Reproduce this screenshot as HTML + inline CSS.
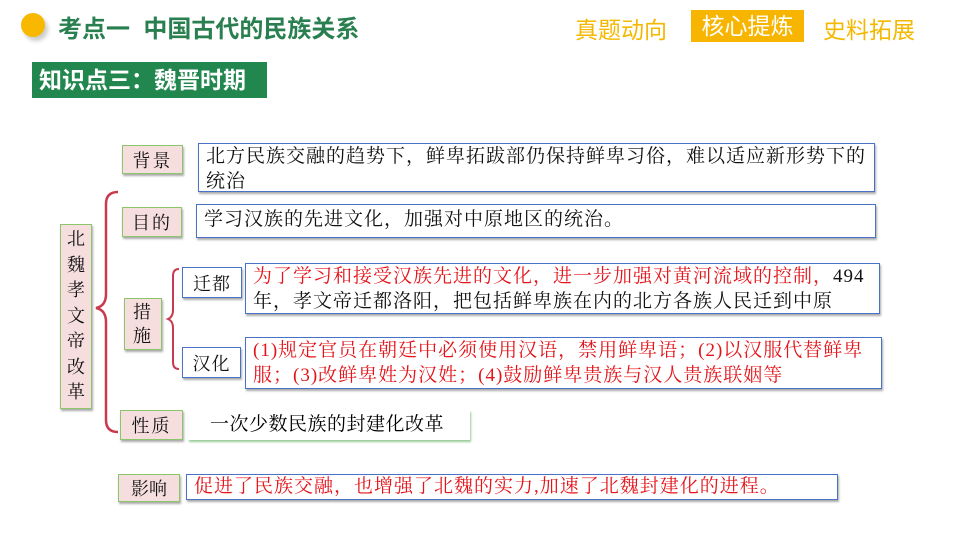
<!DOCTYPE html><html><head><meta charset="utf-8"><style>
body{margin:0;width:960px;height:540px;background:#fff;position:relative;overflow:hidden;font-family:"Liberation Serif","Noto Serif CJK SC",serif;}
.a{position:absolute;box-sizing:border-box}
.h{font-family:"Liberation Sans","Noto Sans CJK SC",sans-serif;font-weight:bold}
.lab{background:#f6dede;border:1.5px solid #8cc66a;box-shadow:1px 2px 2px #aaa;display:flex;align-items:center;justify-content:center;font-size:18px;color:#111;letter-spacing:2px}
.bx{border:1.5px solid #4a72c4;background:#fff;box-shadow:1px 2px 2px #aaa;font-size:19px;letter-spacing:1px;line-height:25px;padding:0 4px 0 7px;color:#111;word-break:break-all}
.red{color:#e4141a}
.wl{background:#fff;border:1.5px solid #4a72c4;box-shadow:1px 2px 2px #aaa;display:flex;align-items:center;justify-content:center;font-size:18px;color:#111;letter-spacing:1px}
</style></head><body>
<div class="a" style="left:21px;top:13px;width:24px;height:24px;border-radius:50%;background:#f8b800;box-shadow:3px 4px 4px #ccc"></div>
<div class="a h" style="left:58px;top:9px;font-size:24px;color:#2a7f50;white-space:nowrap">考点一&nbsp;&nbsp;中国古代的民族关系</div>
<div class="a h" style="left:32px;top:62px;width:235px;height:36px;background:#22874f;color:#fff;font-size:23px;line-height:36px;padding-left:7px">知识点三：魏晋时期</div>
<div class="a h" style="left:575px;top:11px;font-size:23px;color:#f5b800;font-weight:normal">真题动向</div>
<div class="a h" style="left:691px;top:10px;width:113px;height:32px;background:#f7b500;color:#fff;font-size:23px;font-weight:normal;text-align:center;line-height:32px">核心提炼</div>
<div class="a h" style="left:823px;top:11px;font-size:23px;color:#f5b800;font-weight:normal">史料拓展</div>

<div class="a lab" style="left:60px;top:224px;width:32px;height:185px;flex-direction:column;line-height:25.5px;letter-spacing:0">北<br>魏<br>孝<br>文<br>帝<br>改<br>革</div>
<svg class="a" style="left:90px;top:188px" width="35" height="250"><path d="M28 4 Q16 4 16 16 L16 106 Q16 118 6 120 Q16 122 16 134 L16 232 Q16 244 28 244" fill="none" stroke="#c83a4e" stroke-width="2.5"/></svg>
<svg class="a" style="left:165px;top:266px" width="20" height="106"><path d="M14 3 Q8 3 8 10 L8 44 Q8 51 3 53 Q8 55 8 62 L8 96 Q8 103 14 103" fill="none" stroke="#c83a4e" stroke-width="2"/></svg>

<div class="a lab" style="left:122px;top:145px;width:61px;height:29px">背景</div>
<div class="a bx" style="left:198px;top:143px;width:677px;height:49px">北方民族交融的趋势下，鲜卑拓跋部仍保持鲜卑习俗，难以适应新形势下的统治</div>
<div class="a lab" style="left:122px;top:207px;width:60px;height:30px">目的</div>
<div class="a bx" style="left:196px;top:204px;width:680px;height:34px;line-height:30px">学习汉族的先进文化，加强对中原地区的统治。</div>
<div class="a lab" style="left:124px;top:298px;width:38px;height:52px;flex-direction:column;line-height:24px">措<br>施</div>
<div class="a wl" style="left:182px;top:267px;width:60px;height:31px">迁都</div>
<div class="a bx" style="left:245px;top:263px;width:635px;height:51px"><span class="red">为了学习和接受汉族先进的文化，进一步加强对黄河流域的控制，</span>494年，孝文帝迁都洛阳，把包括鲜卑族在内的北方各族人民迁到中原</div>
<div class="a wl" style="left:182px;top:347px;width:59px;height:31px">汉化</div>
<div class="a bx red" style="left:245px;top:337px;width:637px;height:52px">(1)规定官员在朝廷中必须使用汉语，禁用鲜卑语；(2)以汉服代替鲜卑服；(3)改鲜卑姓为汉姓；(4)鼓励鲜卑贵族与汉人贵族联姻等</div>
<div class="a lab" style="left:120px;top:410px;width:63px;height:30px">性质</div>
<div class="a" style="left:188px;top:410px;width:282px;height:30px;background:#fff;box-shadow:1px 2px 2px #9c9;font-size:19px;letter-spacing:0.5px;line-height:30px;padding-left:22px">一次少数民族的封建化改革</div>
<div class="a lab" style="left:118px;top:474px;width:62px;height:28px;letter-spacing:0">影响</div>
<div class="a bx red" style="left:186px;top:474px;width:652px;height:26px;line-height:23px">促进了民族交融，也增强了北魏的实力,加速了北魏封建化的进程。</div>
</body></html>
